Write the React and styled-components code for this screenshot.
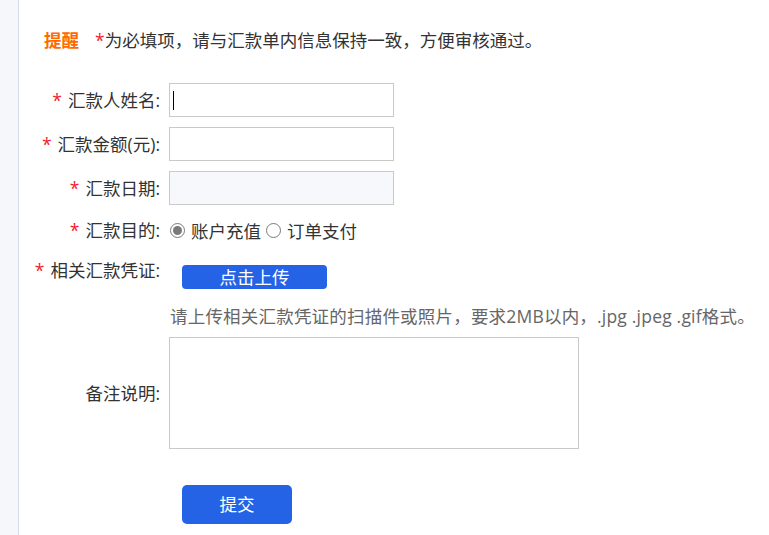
import React from "react";
import styled, { createGlobalStyle } from "styled-components";

const Global = createGlobalStyle`
  html, body { margin: 0; padding: 0; background: #fff; }
  body {
    font-family: "Open Sans", "Noto Sans CJK SC", "Noto Sans", sans-serif;
    font-size: 17.5px;
    color: #333;
  }
  * { box-sizing: border-box; }
`;

const Page = styled.div`
  display: flex;
  min-height: 535px;
`;

const Sidebar = styled.div`
  width: 19px;
  flex: none;
  background: #f5f7fb;
  border-right: 1px solid #d3dbe6;
`;

const Main = styled.main`
  flex: 1;
  padding-top: 28px;
`;

const Notice = styled.div`
  display: flex;
  align-items: center;
  height: 24px;
  line-height: 24px;
  padding-left: 25px;
  white-space: nowrap;
`;

const NoticeTag = styled.span`
  color: #ff6a00;
  font-weight: 700;
  margin-right: 16px;
`;

const Star = styled.span`
  color: #f5222d;
  margin-right: ${(p) => (p.$tight ? "0" : "6px")};
`;

const Form = styled.form`
  margin-top: 31px;
  display: flex;
  flex-direction: column;
`;

const Row = styled.div`
  display: flex;
  align-items: ${(p) => (p.$top ? "flex-start" : "center")};
  margin-top: ${(p) => p.$mt ?? 10}px;
  min-height: ${(p) => p.$h ?? 34}px;
`;

const Label = styled.label`
  width: 142px;
  flex: none;
  text-align: right;
  padding-right: 1px;
  line-height: 30px;
  white-space: nowrap;
  margin-right: 8px;
`;

const Field = styled.div`
  position: relative;
  display: flex;
  align-items: center;
`;

const Input = styled.input`
  width: 225px;
  height: 34px;
  border: 1px solid #c9c9c9;
  background: ${(p) => (p.disabled ? "#f7f8fb" : "#fff")};
  font: inherit;
  padding: 0 6px;
  outline: none;
`;

const Caret = styled.span`
  position: absolute;
  left: 4px;
  top: 8px;
  width: 1px;
  height: 19px;
  background: #000;
`;

const RadioGroup = styled.div`
  display: flex;
  align-items: center;
`;

const RadioItem = styled.label`
  display: flex;
  align-items: center;
  margin-right: 4px;
`;

const RadioDot = styled.span`
  width: 15px;
  height: 15px;
  border-radius: 50%;
  border: 1px solid #7a7a7a;
  margin: 0 6px 0 1px;
  display: inline-flex;
  align-items: center;
  justify-content: center;
  background: #fff;
  &::after {
    content: "";
    width: 9px;
    height: 9px;
    border-radius: 50%;
    background: ${(p) => (p.$checked ? "#7a7a7a" : "transparent")};
  }
`;

const BlueButton = styled.button`
  border: none;
  background: #2563e6;
  color: #fff;
  font: inherit;
  padding: 0;
  cursor: pointer;
  margin-left: 13px;
  width: ${(p) => p.$w}px;
  height: ${(p) => p.$h}px;
  border-radius: ${(p) => p.$r}px;
  line-height: ${(p) => p.$h}px;
  margin-top: ${(p) => p.$mt ?? 0}px;
`;

const Hint = styled.div`
  margin-left: 151px;
  margin-top: 15px;
  line-height: 24px;
  color: #666;
  white-space: nowrap;
  letter-spacing: 0.2px;
`;

const TextArea = styled.textarea`
  width: 410px;
  height: 112px;
  border: 1px solid #c9c9c9;
  font: inherit;
  resize: none;
  outline: none;
`;

export default function App() {
  return (
    <>
      <Global />
      <Page>
        <Sidebar />
        <Main>
          <Notice>
            <NoticeTag>提醒</NoticeTag>
            <Star $tight>*</Star>
            为必填项，请与汇款单内信息保持一致，方便审核通过。
          </Notice>
          <Form onSubmit={(e) => e.preventDefault()}>
            <Row $mt={0}>
              <Label><Star>*</Star>汇款人姓名:</Label>
              <Field>
                <Input type="text" />
                <Caret />
              </Field>
            </Row>
            <Row>
              <Label><Star>*</Star>汇款金额(元):</Label>
              <Field><Input type="text" /></Field>
            </Row>
            <Row>
              <Label><Star>*</Star>汇款日期:</Label>
              <Field><Input type="text" disabled /></Field>
            </Row>
            <Row $h={30}>
              <Label><Star>*</Star>汇款目的:</Label>
              <RadioGroup>
                <RadioItem><RadioDot $checked />账户充值</RadioItem>
                <RadioItem><RadioDot />订单支付</RadioItem>
              </RadioGroup>
            </Row>
            <Row $top $mt={10}>
              <Label><Star>*</Star>相关汇款凭证:</Label>
              <BlueButton type="button" $w={145} $h={24} $r={4} $mt={10}>点击上传</BlueButton>
            </Row>
            <Hint>请上传相关汇款凭证的扫描件或照片，要求2MB以内，.jpg .jpeg .gif格式。</Hint>
            <Row $mt={9}>
              <Label>备注说明:</Label>
              <TextArea />
            </Row>
            <Row $mt={36}>
              <Label as="span" />
              <BlueButton type="submit" $w={110} $h={39} $r={5}>提交</BlueButton>
            </Row>
          </Form>
        </Main>
      </Page>
    </>
  );
}
